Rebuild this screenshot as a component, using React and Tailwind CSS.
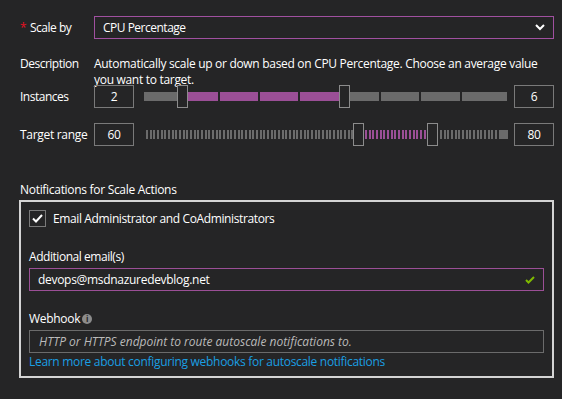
import React from "react";

const PURPLE = "bg-[#9b4f96]";

function Ticks({ n, purple, width }) {
  const items = Array.from({ length: n });
  return (
    <div className={`flex h-[9px] overflow-hidden ${width}`}>
      {items.map((_, i) => (
        <div
          key={i}
          className={`h-full w-[2px] shrink-0 ${purple ? "bg-[#9b4f96]" : "bg-[#6b6b6b]"} ${i % 3 === 1 ? "mr-px" : "mr-[2px]"}`}
        />
      ))}
    </div>
  );
}

function Thumb() {
  return <div className="h-[23px] w-[11px] shrink-0 border border-[#8c8c8c] bg-[#252526]" />;
}

function NumBox({ v }) {
  return (
    <div className="flex h-[23px] w-[40px] shrink-0 items-center justify-center border border-[#7a7a7a]">
      {v}
    </div>
  );
}

export default function App() {
  return (
    <div className="h-[399px] w-[562px] overflow-hidden bg-[#252526] pl-[20px] pr-[8px] pt-[16px] font-['Open_Sans',sans-serif] text-[12px] leading-[16px] tracking-[-0.3px] text-white">
      {/* Scale by */}
      <div className="flex h-[23px] items-center">
        <div className="flex w-[74px] shrink-0 items-center">
          <span className="w-[10px] text-[#e81123]">*</span>
          <span className="tracking-[-0.5px]">Scale by</span>
        </div>
        <div className="flex h-[23px] flex-1 items-center justify-between border border-[#a050a0] pl-[8px] pr-[8px]">
          <span className="tracking-[-0.5px]">CPU Percentage</span>
          <svg width="10" height="7" viewBox="0 0 10 7">
            <path d="M1 1 L5 5 L9 1" fill="none" stroke="white" strokeWidth="2" />
          </svg>
        </div>
      </div>

      {/* Description */}
      <div className="mt-[17px] flex">
        <div className="w-[74px] shrink-0 tracking-[-0.5px]">Description</div>
        <div className="flex-1 pr-[6px]">
          Automatically scale up or down based on CPU Percentage. Choose an average value you want to target.
        </div>
      </div>

      {/* Instances */}
      <div className="-mt-[3px] flex h-[23px] items-center">
        <div className="w-[74px] shrink-0 tracking-[-0.5px]">Instances</div>
        <NumBox v="2" />
        <div className="ml-[10px] flex h-full items-center">
          <div className="h-[9px] w-[33px] bg-[#6b6b6b]" />
          <Thumb />
          <div className={`h-[9px] w-[30px] ${PURPLE}`} />
          <div className={`ml-[2px] h-[9px] w-[38px] ${PURPLE}`} />
          <div className={`ml-[2px] h-[9px] w-[38px] ${PURPLE}`} />
          <div className={`ml-[2px] h-[9px] w-[39px] ${PURPLE}`} />
          <Thumb />
          <div className="h-[9px] w-[29px] bg-[#6b6b6b]" />
          <div className="ml-[2px] h-[9px] w-[38px] bg-[#6b6b6b]" />
          <div className="ml-[2px] h-[9px] w-[39px] bg-[#6b6b6b]" />
          <div className="ml-[2px] h-[9px] w-[45px] bg-[#6b6b6b]" />
        </div>
        <div className="ml-auto">
          <NumBox v="6" />
        </div>
      </div>

      {/* Target range */}
      <div className="mt-[15px] flex h-[23px] items-center">
        <div className="w-[74px] shrink-0 whitespace-nowrap">Target range</div>
        <NumBox v="60" />
        <div className="ml-[12px] flex h-full items-center">
          <Ticks n={57} width="w-[207px]" />
          <Thumb />
          <div className="ml-[1px]">
            <Ticks n={18} purple width="w-[62px]" />
          </div>
          <Thumb />
          <div className="ml-[2px]">
            <Ticks n={17} width="w-[58px]" />
          </div>
          <div className="ml-px h-[9px] w-[9px] bg-[#6b6b6b]" />
        </div>
        <div className="ml-auto">
          <NumBox v="80" />
        </div>
      </div>

      {/* Notifications */}
      <div className="mt-[36px]">Notifications for Scale Actions</div>
      <div className="-ml-px mt-[2px] h-[178px] border-2 border-[#d4d4d4] px-[8px] pt-[8px]">
        <div className="flex items-center">
          <div className="flex h-[17px] w-[17px] items-center justify-center border border-[#7a7a7a]">
            <svg width="11" height="9" viewBox="0 0 11 9">
              <path d="M1 4.5 L4 7.5 L10 1" fill="none" stroke="white" strokeWidth="2" />
            </svg>
          </div>
          <span className="ml-[7px] tracking-[-0.38px]">Email Administrator and CoAdministrators</span>
        </div>

        <div className="mt-[22px] tracking-[-0.45px]">Additional email(s)</div>
        <div className="mt-[3px] flex h-[23px] items-center justify-between border border-[#9b4f96] pl-[8px] pr-[8px]">
          <span>devops@msdnazuredevblog.net</span>
          <svg width="10" height="8" viewBox="0 0 10 8">
            <path d="M1 4 L3.5 6.5 L9 1" fill="none" stroke="#7fba00" strokeWidth="2" />
          </svg>
        </div>

        <div className="mt-[20px] flex items-center">
          <span>Webhook</span>
          <span className="ml-[2px] flex h-[10px] w-[10px] items-center justify-center rounded-full bg-[#8c8c8c] text-[8px] font-bold leading-none tracking-normal text-[#252526]">
            i
          </span>
        </div>
        <div className="mt-[3px] flex h-[23px] items-center border border-[#6b6b6b] pl-[9px] italic tracking-normal text-[#bababa]">
          HTTP or HTTPS endpoint to route autoscale notifications to.
        </div>
        <div className="mt-px text-[#1a9fe3]">
          Learn more about configuring webhooks for autoscale notifications
        </div>
      </div>
    </div>
  );
}
